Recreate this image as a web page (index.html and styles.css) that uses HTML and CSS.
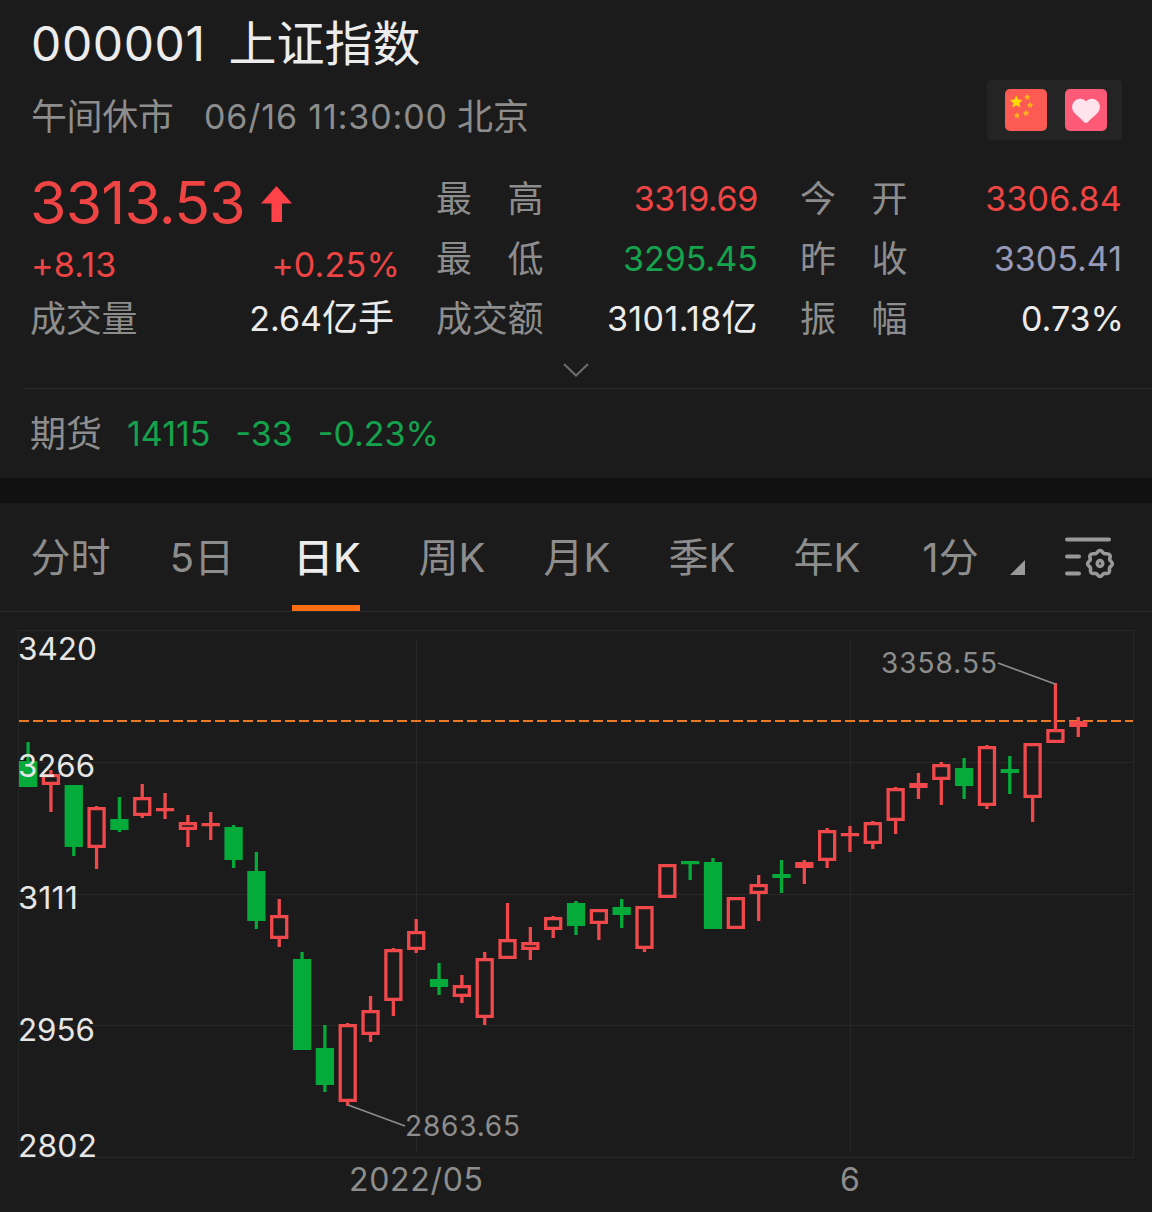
FILE: index.html
```html
<!DOCTYPE html>
<html lang="zh-CN">
  <head>
    <meta charset="utf-8">
    <title>上证指数</title>
    <link rel="stylesheet" href="styles.css">
  </head>

  <body>
    <div class="header">
      <div>
        <h1 class="title"><span class="code">000001</span><span>上证指数</span></h1>
        <div class="status">
          <span class="state">午间休市</span>
          <span class="time">06/16 11:30:00</span>
          <span>北京</span>
        </div>
      </div>
      <div class="badges">
        <svg class="badge" viewBox="0 0 42 42">
          <rect width="42" height="42" rx="5" fill="#fb5b52" />
          <path fill="#fedc00" d="M11.3 6.3l1.900 4.300 4.600.4-3.500 3 1.100 4.600-4.100-2.400-4.100 2.400 1.100-4.600-3.500-3 4.600-.4z" />
          <g fill="#fbb21c">
            <path d="M22.300 4.600l1 2.200 2.400.2-1.800 1.600.5 2.400-2.100-1.300-2.100 1.300.5-2.400-1.800-1.600 2.400-.2z" />
            <path d="M25 12.600l1 2.200 2.400.2-1.800 1.600.5 2.400-2.100-1.300-2.100 1.300.5-2.400-1.800-1.600 2.400-.2z" />
            <path d="M21 20.600l1 2.200 2.400.2-1.800 1.600.5 2.400-2.100-1.300-2.100 1.300.5-2.400-1.800-1.600 2.400-.2z" />
            <path d="M12 23.100l1 2.200 2.400.2-1.800 1.600.5 2.400-2.100-1.300-2.100 1.300.5-2.400-1.800-1.600 2.400-.2z" />
          </g>
        </svg>
        <svg class="badge" viewBox="0 0 42 42">
          <rect width="42" height="42" rx="5" fill="#fd5a78" />
          <path fill="#ffe3ec" d="M21 12.500C18.500 9.300 14.200 9 11 11c-4.500 2.900-5 8.500-2 12.300 2.500 3.200 7 6.500 10 9.700q2 2 4 0c3-3.200 7.500-6.500 10-9.700 3-3.800 2.500-9.400-2-12.300-3.200-2-7.500-1.700-10 1.500z" />
        </svg>
      </div>
    </div>

    <div class="quote">
      <div class="quote-main">
        <div class="price red">
          <span class="price-value">3313.53</span>
          <svg class="arrow" viewBox="0 0 31 36"><path fill="#ff4248" d="M15.500 0L31 17.500H21V36H10.500V17.500H0z" /></svg>
        </div>
        <div class="change red"><span>+8.13</span><span>+0.25%</span></div>
        <div class="row volume"><span class="label">成交量</span><span class="value">2.64<span class="unit">亿手</span></span></div>
      </div>
      <div class="quote-col">
        <div class="row"><span class="label">最　高</span><span class="value red high">3319.69</span></div>
        <div class="row"><span class="label">最　低</span><span class="value green">3295.45</span></div>
        <div class="row"><span class="label">成交额</span><span class="value amount">3101.18<span class="unit">亿</span></span></div>
      </div>
      <div class="quote-col">
        <div class="row"><span class="label">今　开</span><span class="value red open">3306.84</span></div>
        <div class="row"><span class="label">昨　收</span><span class="value flat">3305.41</span></div>
        <div class="row"><span class="label">振　幅</span><span class="value swing">0.73%</span></div>
      </div>
    </div>

    <div class="expand">
      <svg class="chevron" viewBox="0 0 26 14"><path d="M1 1l12 11.500L25 1" /></svg>
    </div>

    <div class="futures">
      <span class="label">期货</span>
      <span class="green">14115</span>
      <span class="green">-33</span>
      <span class="green">-0.23%</span>
    </div>

    <div class="tabs">
      <div class="tab tab-first">分时</div>
      <div class="tab">5日</div>
      <div class="tab active">日K</div>
      <div class="tab">周K</div>
      <div class="tab">月K</div>
      <div class="tab">季K</div>
      <div class="tab">年K</div>
      <div class="tab tab-minute">1分</div>
      <svg class="more" viewBox="0 0 15 15"><path d="M15 0v15H0z" /></svg>
      <svg class="settings" viewBox="0 0 50 42">
        <path d="M2 2.500h42M2 19.500h12M2 36.500h12" />
        <path class="gear" d="M35 13.500c2.300 0 2.500 2.400 4.300 3.100s3.800-.6 5.300 1.100-.2 3.600.1 5 2.700 2 2.700 4-2.200 2.400-2.800 4 .8 3.600-.8 5.100-3.500.1-5 .8-1.800 2.900-3.800 2.900-2.300-2.200-3.800-2.900-3.400.7-5-.8-.2-3.500-.8-5.100-2.800-2-2.800-4 2.400-2.600 2.700-4-1.400-3.300.1-5 3.500-.4 5.300-1.100 2-3.100 4.300-3.100z" />
        <ellipse class="gear" cx="35" cy="26.500" rx="2.700" ry="3" />
      </svg>
    </div>

    <svg id="chart" class="chart" viewBox="0 0 1152 600">
      <g class="grid">
        <rect x="18.500" y="18.500" width="1115" height="527" />
        <path d="M19 150.500h1114M19 282.500h1114M19 413.500h1114M416.500 27v512M850.500 27v512" />
      </g>
      <path class="last-price" d="M19 109h1114" />
      <g id="candles"></g>
      <path class="leader" d="M998 51l57 21M348 493l57 21" />
      <g class="axis">
        <text x="18" y="48" textLength="79" lengthAdjust="spacingAndGlyphs">3420</text>
        <text x="18" y="165" textLength="77" lengthAdjust="spacingAndGlyphs">3266</text>
        <text x="18" y="297" textLength="60" lengthAdjust="spacingAndGlyphs">3111</text>
        <text x="18" y="429" textLength="77" lengthAdjust="spacingAndGlyphs">2956</text>
        <text x="18" y="545" textLength="79" lengthAdjust="spacingAndGlyphs">2802</text>
      </g>
      <g class="note">
        <text x="881" y="61" textLength="116">3358.55</text>
        <text x="405" y="524" textLength="115">2863.65</text>
      </g>
      <g class="date">
        <text x="349" y="579" textLength="134">2022/05</text>
        <text x="840" y="579">6</text>
      </g>
    </svg>

    <script src="chart.js"></script>
  </body>
</html>
```

FILE: styles.css
```css
* {
  box-sizing: border-box;
}

body {
  margin: 0;
  width: 1152px;
  height: 1212px;
  overflow: hidden;
  background-color: #1b1b1b;
  color: #ececec;
  font-family: Inter, "Noto Sans CJK SC", sans-serif;
  font-size: 34px;
}

.red {
  color: #ee4443;
}

.green {
  color: #14a34c;
}

.value.flat {
  color: #979ab8;
}

.label {
  color: #8d8d8d;
  font-size: 36px;
}

/* Header */

.header {
  display: flex;
  justify-content: space-between;
  height: 169px;
  padding: 14px 30px 0 31px;
}

.title {
  display: flex;
  gap: 23px;
  margin: 0;
  height: 60px;
  line-height: 60px;
  font-size: 48px;
  font-weight: 400;
}

.code {
  letter-spacing: 0.6px;
}

.status {
  display: flex;
  margin-top: 13px;
  height: 60px;
  line-height: 60px;
  font-size: 36px;
  color: #8d8d8d;
}

.state {
  width: 173px;
  letter-spacing: -0.4px;
}

.time {
  width: 253px;
  font-size: 34px;
  letter-spacing: 0.85px;
}

.badges {
  display: flex;
  align-items: center;
  justify-content: center;
  gap: 18px;
  width: 135px;
  height: 60px;
  margin-top: 66px;
  padding-left: 2px;
  border-radius: 4px;
  background-color: #242424;
}

.badge {
  width: 42px;
  height: 42px;
}

/* Quote */

.quote {
  display: flex;
  height: 180px;
  padding-left: 30px;
  line-height: 60px;
}

.quote-main {
  display: flex;
  flex-direction: column;
  width: 368px;
}

.quote-col {
  width: 322px;
  margin-left: 38px;
}

.quote-col + .quote-col {
  margin-left: 42px;
}

.price {
  display: flex;
  align-items: center;
  gap: 16px;
  height: 68px;
  font-size: 59px;
}

.price-value {
  letter-spacing: -0.8px;
}

.arrow {
  width: 31px;
  height: 36px;
  margin-top: 2px;
}

.change {
  display: flex;
  justify-content: space-between;
  height: 52px;
  margin-right: -2px;
  padding-left: 1px;
  line-height: 56px;
  letter-spacing: 0.2px;
}

.row {
  display: flex;
  justify-content: space-between;
  height: 60px;
  white-space: nowrap;
}

.row .label {
  letter-spacing: -0.3px;
}

.high {
  letter-spacing: -0.4px;
}

.open {
  letter-spacing: 0.2px;
}

.swing {
  margin-right: -2px;
}

.unit {
  font-size: 36px;
  line-height: 1;
}

.amount {
  letter-spacing: 0.4px;
}

.volume {
  padding-right: 4px;
}

.expand {
  display: flex;
  justify-content: center;
  height: 40px;
  margin-left: 24px;
  padding-right: 24px;
  padding-top: 14px;
  border-bottom: 1px solid #2a2a2a;
}

.chevron {
  width: 26px;
  height: 14px;
  fill: none;
  stroke: #6c6c6c;
  stroke-width: 2;
}

.futures {
  display: flex;
  gap: 25px;
  height: 114px;
  padding-left: 30px;
  line-height: 90px;
  border-bottom: 25px solid #111;
}

/* Tabs */

.tabs {
  display: flex;
  height: 109px;
  border-bottom: 1px solid #2a2a2a;
}

.tab {
  display: flex;
  flex-direction: column;
  align-items: center;
  width: 125px;
  height: 108px;
  padding-left: 3px;
  line-height: 110px;
  font-size: 40px;
  color: #8d8d8d;
}

.tab-first {
  width: 138px;
}

.tab-minute {
  padding-left: 0;
}

.tab.active {
  color: #ececec;
  font-weight: 500;
}

.tab.active::after {
  content: "";
  width: 68px;
  height: 6px;
  margin-top: -8px;
  margin-left: -3px;
  background-color: #ff6d12;
}

.more {
  width: 15px;
  height: 15px;
  margin-top: 57px;
  margin-left: -3px;
  fill: #999;
}

.settings {
  width: 50px;
  height: 42px;
  margin-top: 34px;
  margin-left: 40px;
  fill: none;
  stroke: #999;
  stroke-width: 4;
  stroke-linecap: round;
}

.settings .gear {
  stroke-width: 3.6;
}

/* Chart */

.chart {
  display: block;
  width: 1152px;
  height: 600px;
}

.grid {
  fill: none;
  stroke: #272727;
}

.last-price {
  stroke: #ec7a25;
  stroke-width: 2;
  stroke-dasharray: 10 4;
}

.leader {
  fill: none;
  stroke: #8d8d8d;
  stroke-width: 1.5;
}

.axis {
  font-size: 31px;
  fill: #e6e6e6;
}

.note {
  font-size: 28px;
  fill: #8d8d8d;
}

.date {
  font-size: 32px;
  fill: #8d8d8d;
}

.up {
  fill: none;
  stroke: #f0484b;
  stroke-width: 3.3;
}

.down {
  fill: #04ab3b;
  stroke: #04ab3b;
  stroke-width: 3.3;
}
```

FILE: chart.js
```js
// direction, high, body top, body bottom, low (chart pixels)
const candles = [
  ['down', 742, 761, 787, 787], ['up', 770, 774, 785, 812], ['down', 785, 785, 847, 856],
  ['up', 806, 807, 848, 869], ['down', 797, 819, 830, 832], ['up', 784, 797, 816, 818],
  ['up', 793, 808, 811, 819], ['up', 815, 822, 830, 847], ['up', 812, 823, 826, 840],
  ['down', 825, 827, 860, 868], ['down', 852, 871, 921, 929], ['up', 899, 915, 939, 947],
  ['down', 952, 959, 1050, 1050], ['down', 1025, 1048, 1085, 1092], ['up', 1023, 1024, 1102, 1106],
  ['up', 996, 1010, 1035, 1042], ['up', 948, 949, 1001, 1016], ['up', 919, 931, 950, 953],
  ['down', 963, 979, 987, 995], ['up', 975, 985, 997, 1003], ['up', 952, 958, 1018, 1025],
  ['up', 903, 939, 959, 959], ['up', 927, 942, 950, 960], ['up', 916, 917, 930, 938],
  ['down', 901, 903, 926, 935], ['up', 909, 909, 924, 940], ['down', 899, 907, 915, 928],
  ['up', 906, 906, 949, 952], ['up', 864, 864, 898, 898], ['down', 861, 861, 864, 880],
  ['down', 858, 862, 929, 929], ['up', 897, 897, 929, 929], ['up', 875, 884, 894, 921],
  ['down', 860, 874, 878, 893], ['up', 860, 862, 868, 884], ['up', 828, 830, 861, 868],
  ['up', 826, 833, 836, 852], ['up', 821, 822, 844, 849], ['up', 787, 788, 821, 834],
  ['up', 773, 783, 788, 799], ['up', 762, 764, 780, 805], ['down', 758, 768, 786, 799],
  ['up', 745, 746, 806, 809], ['down', 756, 769, 773, 794], ['up', 743, 743, 798, 822],
  ['up', 683, 729, 743, 743], ['up', 717, 721, 727, 737],
];

const TOP = 612;
const STEP = 22.83;
const WIDTH = 18.3;
const LINE = 3.3;

document.getElementById('candles').innerHTML = candles.map(([dir, high, top, bottom, low], i) => {
  const x = 28.1 + i * STEP;
  const left = x - WIDTH / 2 + LINE / 2;
  const y1 = top - TOP + LINE / 2;
  const h = Math.max(bottom - top - LINE, 0.01);
  return `<path class="${dir}" d="M${x} ${high - TOP}V${top - TOP}M${x} ${bottom - TOP}V${low - TOP}` +
    `M${left} ${y1}h${WIDTH - LINE}v${h}h${LINE - WIDTH}z"/>`;
}).join('');
```
